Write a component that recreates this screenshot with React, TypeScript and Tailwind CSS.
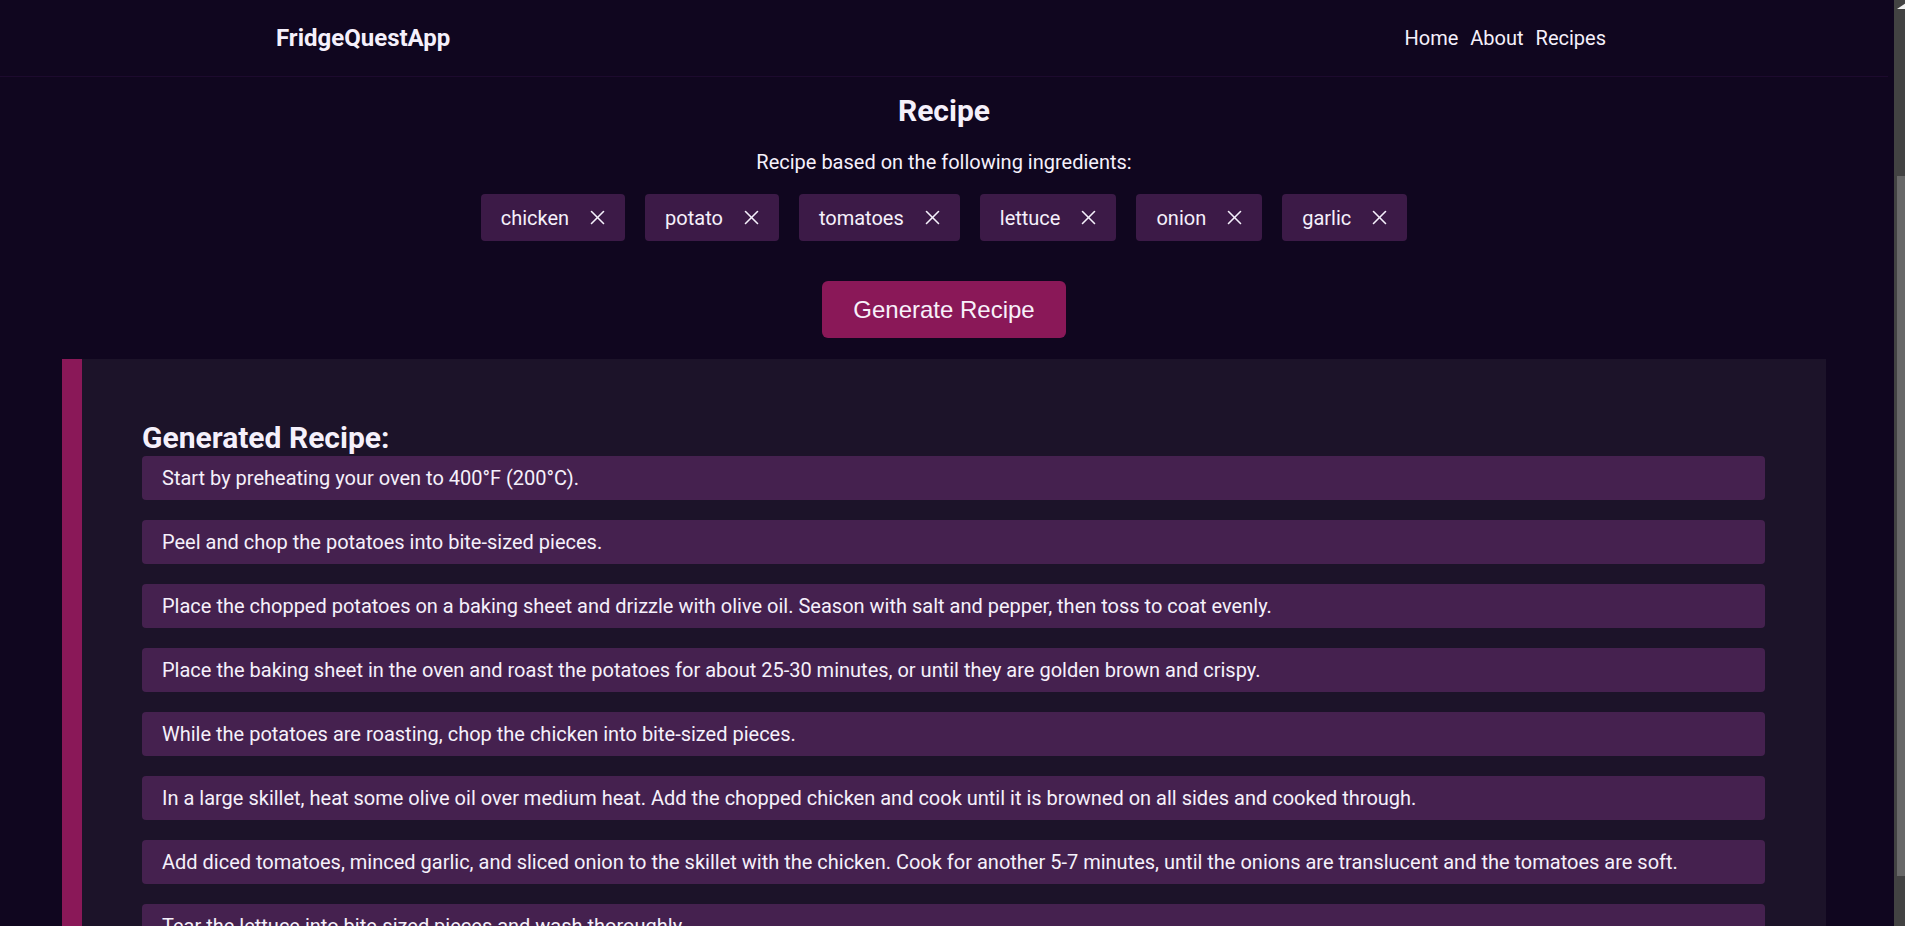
const ingredients = ["chicken", "potato", "tomatoes", "lettuce", "onion", "garlic"];

const steps = [
  "Start by preheating your oven to 400°F (200°C).",
  "Peel and chop the potatoes into bite-sized pieces.",
  "Place the chopped potatoes on a baking sheet and drizzle with olive oil. Season with salt and pepper, then toss to coat evenly.",
  "Place the baking sheet in the oven and roast the potatoes for about 25-30 minutes, or until they are golden brown and crispy.",
  "While the potatoes are roasting, chop the chicken into bite-sized pieces.",
  "In a large skillet, heat some olive oil over medium heat. Add the chopped chicken and cook until it is browned on all sides and cooked through.",
  "Add diced tomatoes, minced garlic, and sliced onion to the skillet with the chicken. Cook for another 5-7 minutes, until the onions are translucent and the tomatoes are soft.",
  "Tear the lettuce into bite-sized pieces and wash thoroughly.",
  "Arrange the lettuce on a serving plate and top with the roasted potatoes.",
  "Spoon the chicken and tomato mixture over the potatoes and serve immediately.",
];

function CloseIcon() {
  return (
    <svg width="15" height="15" viewBox="0 0 15 15" fill="none" stroke="currentColor" strokeWidth="1.6" strokeLinecap="round">
      <path d="M1.5 1.5 L13.5 13.5" />
      <path d="M13.5 1.5 L1.5 13.5" />
    </svg>
  );
}

function ScrollTrack() {
  return (
    <aside className="w-[17px] shrink-0 flex justify-end">
      <div className="w-[11px] h-screen sticky top-0 bg-[#424242] flex flex-col items-center">
        <svg width="9" height="6" viewBox="0 0 9 6" className="mt-[3px] ml-[3px]">
          <path d="M0 6 L9 6 L9 0 Z" fill="#f0f0f0" />
        </svg>
        <div className="mt-[167px] h-[700px] w-[8px] ml-[2px] bg-[#686868]" />
      </div>
    </aside>
  );
}

export default function App() {
  return (
    <div className="flex min-h-screen bg-[#10061f] text-[#f5f0fb] font-['Roboto',sans-serif]">
      <div className="flex-1 min-w-0">
        <nav className="h-[77px] border-b border-[#1d0a2e] flex items-center justify-between pl-[276px] pr-[282px]">
          <span className="text-[24px] font-bold">FridgeQuestApp</span>
          <div className="flex gap-[12px] text-[20px]">
            <a>Home</a>
            <a>About</a>
            <a>Recipes</a>
          </div>
        </nav>

        <main className="flex flex-col items-center">
          <h1 className="mt-[16px] text-[30px] leading-[36px] font-bold">Recipe</h1>
          <p className="mt-[18px] text-[20px]">Recipe based on the following ingredients:</p>
          <div className="mt-[17px] flex gap-5">
            {ingredients.map((item) => (
              <div key={item} className="h-[47px] px-5 flex items-center gap-[21px] rounded-[4px] bg-[#3c1a47] text-[20px]">
                <span>{item}</span>
                <CloseIcon />
              </div>
            ))}
          </div>
          <button className="mt-10 h-[57px] px-[31px] rounded-[6px] bg-[#8a1858] text-[24px] text-[#f7f0fa] font-['Liberation_Sans',Arial,sans-serif]">
            Generate Recipe
          </button>
        </main>

        <section className="mx-[62px] mt-[21px] border-l-[20px] border-[#8a1858] bg-[#1c1329] pt-[61px] pl-[60px] pr-[61px] pb-[60px]">
          <h2 className="text-[30px] font-bold leading-[36px]">Generated Recipe:</h2>
          <ul className="flex flex-col gap-5">
            {steps.map((s) => (
              <li key={s} className="h-11 px-5 flex items-center rounded-[4px] bg-[#45214f] text-[20px]">
                {s}
              </li>
            ))}
          </ul>
        </section>
      </div>
      <ScrollTrack />
    </div>
  );
}
